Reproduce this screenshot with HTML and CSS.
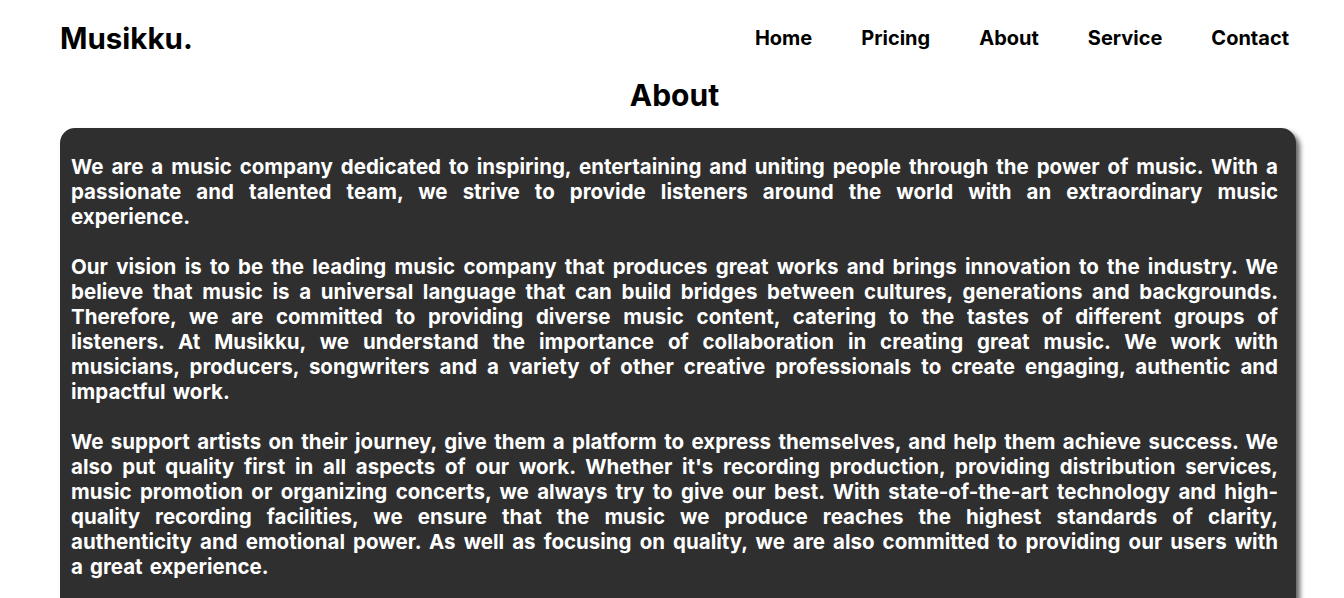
FILE: index.html
```html
<!DOCTYPE html>
<html lang="en">
<head>
<meta charset="utf-8">
<title>Musikku - About</title>
<link rel="stylesheet" href="styles.css">
</head>
<body>
<header class="header">
  <div class="logo">Musikku.</div>
  <nav class="nav">
    <a href="#">Home</a>
    <a href="#">Pricing</a>
    <a href="#">About</a>
    <a href="#">Service</a>
    <a href="#">Contact</a>
  </nav>
</header>
<main class="about">
  <h1 class="title">About</h1>
  <section class="card">
    <p>We are a music company dedicated to inspiring, entertaining and uniting people through the power of music. With a passionate and talented team, we strive to provide listeners around the world with an extraordinary music experience.</p>
    <p>Our vision is to be the leading music company that produces great works and brings innovation to the industry. We believe that music is a universal language that can build bridges between cultures, generations and backgrounds. Therefore, we are committed to providing diverse music content, catering to the tastes of different groups of listeners. At Musikku, we understand the importance of collaboration in creating great music. We work with musicians, producers, songwriters and a variety of other creative professionals to create engaging, authentic and impactful work.</p>
    <p>We support artists on their journey, give them a platform to express themselves, and help them achieve success. We also put quality first in all aspects of our work. Whether it's recording production, providing distribution services, music promotion or organizing concerts, we always try to give our best. With state-of-the-art technology and high-quality recording facilities, we ensure that the music we produce reaches the highest standards of clarity, authenticity and emotional power. As well as focusing on quality, we are also committed to providing our users with a great experience.</p>
  </section>
</main>
</body>
</html>
```
FILE: styles.css
```css
* { box-sizing: border-box; }
html, body { margin: 0; padding: 0; background: #fff; }
body { font-family: Inter, "Noto Sans", sans-serif; color: #000; }

.header {
  display: flex;
  align-items: center;
  justify-content: space-between;
  height: 76px;
  padding: 0 55px 0 60px;
}
.logo {
  font-size: 29.5px;
  font-weight: 700;
}
.nav { display: flex; gap: 49px; }
.nav a {
  font-weight: 700;
  font-size: 20px;
  color: #000;
  text-decoration: none;
}

.about { padding: 0 0 0 60px; }
.title {
  margin: 0 55px 0 0;
  text-align: center;
  font-size: 30px;
  font-weight: 700;
  line-height: 38px;
}
.card {
  width: 1236px;
  margin-top: 14px;
  background: #2f2f2f;
  border-radius: 15px;
  box-shadow: 4px 4px 5px rgba(0, 0, 0, 0.6);
  padding: 26px 18px 20px 11px;
  color: #fff;
}
.card p {
  margin: 0 0 25px;
  font-size: 20.5px;
  font-weight: 700;
  line-height: 25px;
  word-spacing: 2.2px;
  text-align: justify;
}
```
